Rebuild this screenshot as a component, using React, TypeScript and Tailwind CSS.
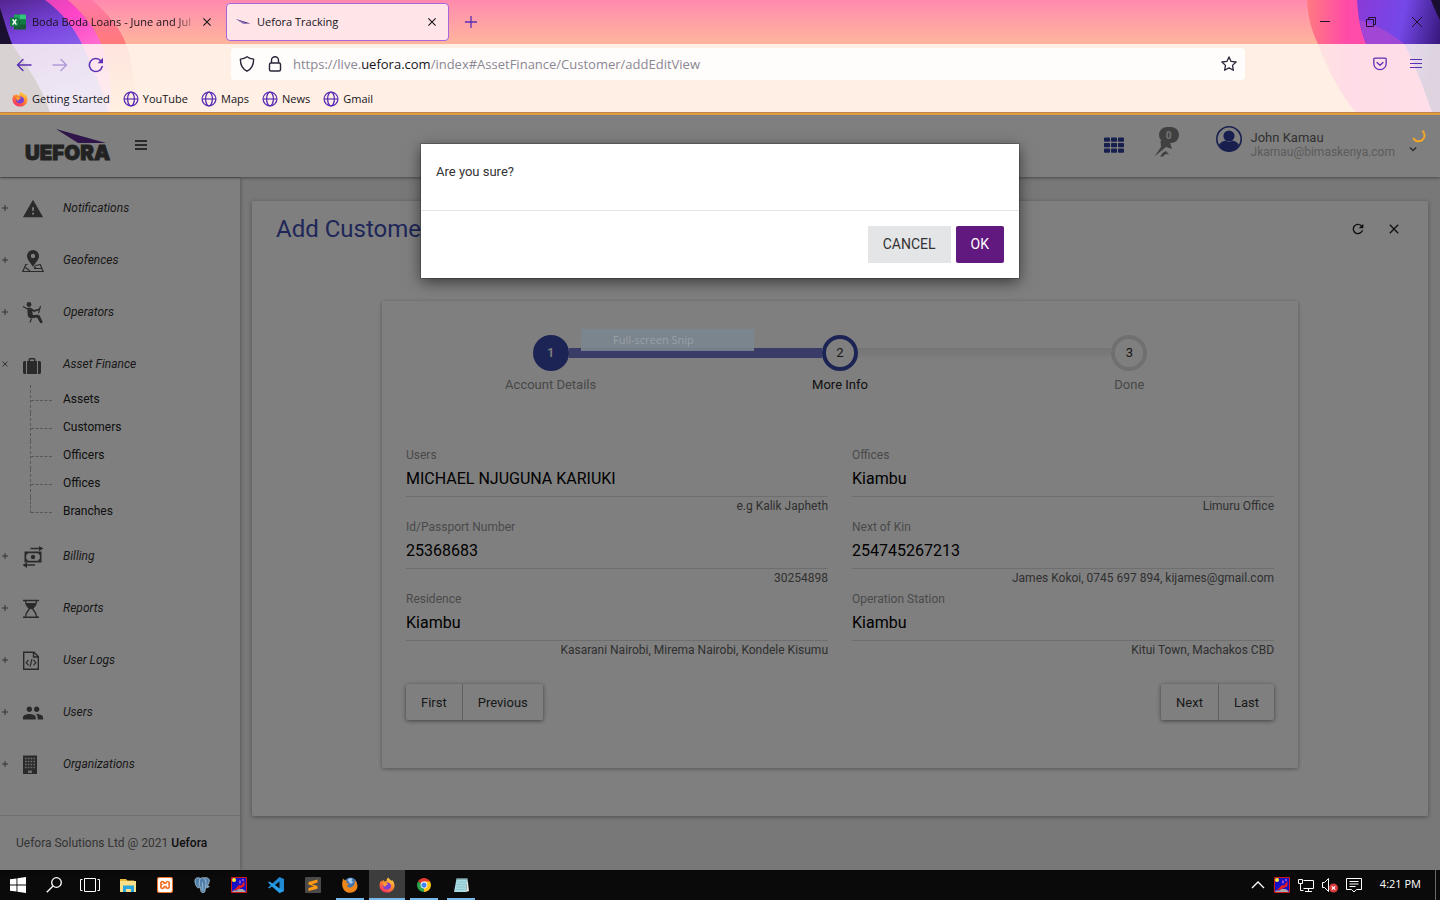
import { useId, useState, type ReactNode } from "react";
import { MdWarning, MdPeople, MdRefresh, MdClose } from "react-icons/md";
import { SiXampp } from "react-icons/si";

/* ---------- browser icons ---------- */

const Globe = () => (
  <svg className="size-4" viewBox="0 0 16 16" fill="none" stroke="#5b2fb5" strokeWidth="1.3">
    <circle cx="8" cy="8" r="6.900" />
    <ellipse cx="8" cy="8" rx="3.400" ry="6.900" />
    <path d="M1.200 8h13.600" strokeWidth="1.200" />
  </svg>
);

const Firefox = ({ className = "size-4" }: { className?: string }) => {
  const id = useId();
  return (
    <svg className={className} viewBox="0 0 16 16">
      <defs>
        <linearGradient id={id} x1="0.8" y1="0" x2="0.2" y2="1">
          <stop offset="0" stopColor="#ffe14a" />
          <stop offset="0.45" stopColor="#ff8a2b" />
          <stop offset="1" stopColor="#f5246b" />
        </linearGradient>
      </defs>
      <path fill={`url(#${id})`} d="M9.200.6c.6 1.500 2.200 2.100 3.400 3.400l.4-1c1.700 1.600 2.600 3.600 2.500 5.700-.2 4-3.500 6.900-7.500 6.900S.5 12.500.5 8.500c0-2 .7-3.700 1.700-5l.5 1.300c.6-.8 1.200-1.400 2-1.900 0 .8.300 1.200.8 1.500 1-.2 1.700 0 2.200.3C7.300 3.200 8 1.600 9.200.6z" />
      <path fill="#7b3fd6" d="M8 5.400c2.300 0 4 1.500 4 3.500s-1.700 3.600-4 3.600-3.900-1.600-3.900-3.500c0-.8.2-1.400.5-1.900.6 1 1.500 1.200 2.400 1 .9-.3 1.600-.7 1.700-1.200-.3-.3-.8-.4-1.300-.4.1-.6.300-.9.6-1.100z" />
      <path fill="#ffa030" d="M4 6.600c1-.7 2.200-.7 3-.1.600.400 1.300.4 1.700.5-.2.800-1 1.100-1.700 1.300-.6.300-.6 1-.1 1.500-1.600.1-2.900-1.300-2.900-3.200z" />
    </svg>
  );
};

const Excel = () => (
  <svg className="size-4" viewBox="0 0 16 16">
    <rect x="4" y="0.500" width="12" height="15" rx="1" fill="#185c37" />
    <path d="M4 .5h6v5H4z" fill="#21a366" />
    <path d="M10 .5h5a1 1 0 0 1 1 1v4h-6z" fill="#33c481" />
    <path d="M10 5.500h6v5h-6z" fill="#107c41" />
    <rect x="0" y="3.500" width="9" height="9" rx="1" fill="#107c41" />
    <path d="M2.600 5.400 6.400 10.600M6.400 5.400 2.600 10.600" stroke="#fff" strokeWidth="1.500" />
  </svg>
);

const Swoosh = () => (
  <svg className="size-4" viewBox="0 0 16 16">
    <path d="M1 5 15.500 9.500H8z" fill="#43217c" />
    <path d="M1 5 12 9.500H8z" fill="#8f7fc0" />
  </svg>
);

const Cross = () => (
  <svg className="size-2" viewBox="0 0 8 8" stroke="currentColor" strokeWidth="1.100">
    <path d="M.4.4 7.600 7.600M7.600.4.4 7.600" />
  </svg>
);

const ThemeArt = () => (
  <>
    <svg className="absolute left-0 top-0 h-28 w-40" viewBox="0 0 160 112" preserveAspectRatio="none">
      <defs>
        <linearGradient id="l1" x1="0" y1="0" x2="0" y2="1">
          <stop offset="0" stopColor="#ff78a8" />
          <stop offset="0.4" stopColor="#ff7a78" />
          <stop offset="1" stopColor="#ffc08a" />
        </linearGradient>
        <linearGradient id="l2" x1="0" y1="0" x2="0.6" y2="1">
          <stop offset="0" stopColor="#d040b0" />
          <stop offset="0.4" stopColor="#ff45c8" />
          <stop offset="1" stopColor="#ff9ad8" />
        </linearGradient>
        <linearGradient id="l3" x1="0" y1="0" x2="0.3" y2="1">
          <stop offset="0" stopColor="#53258f" />
          <stop offset="0.35" stopColor="#7a45e0" />
          <stop offset="1" stopColor="#a08cf8" />
        </linearGradient>
      </defs>
      <path fill="url(#l1)" d="M0 0H92C108 14 120 28 126 44C134 66 136 90 134 112H0Z" />
      <path fill="url(#l2)" d="M0 0H68C86 16 96 30 103 48C110 70 112 92 110 112H0Z" />
      <path fill="url(#l3)" d="M0 0H45C62 12 74 28 82 44C92 66 104 92 108 112H0Z" />
      <path fill="#1c1030" d="M0 8C4 20 8 34 12 44C22 60 40 82 50 112H0Z" />
    </svg>
    <svg className="absolute right-0 top-0 h-28 w-40" viewBox="0 0 160 112" preserveAspectRatio="none">
      <defs>
        <linearGradient id="r1" x1="0" y1="0" x2="1" y2="0">
          <stop offset="0" stopColor="#ff7a80" />
          <stop offset="0.3" stopColor="#ff4aa8" />
          <stop offset="1" stopColor="#ff58b8" />
        </linearGradient>
        <linearGradient id="r2" x1="0" y1="0" x2="1" y2="0.3">
          <stop offset="0" stopColor="#8a3ad8" />
          <stop offset="0.55" stopColor="#7448e8" />
          <stop offset="1" stopColor="#3a1a80" />
        </linearGradient>
      </defs>
      <path fill="url(#r1)" d="M27 0C28 18 32 32 38 44C48 70 60 94 76 112H160V0Z" />
      <path fill="url(#r2)" d="M77 0C78 18 81 32 86 44H124C136 66 144 90 152 112H160V0Z" />
      <path fill="#b048d0" d="M86 44C83 36 81 26 80 20C98 26 112 34 124 44Z" opacity="0.700" />
      <path fill="#1a0e30" d="M151 0C154 8 157 14 160 20V0Z" />
    </svg>
  </>
);

const BrowserChrome = () => (
  <header className="relative shrink-0 bg-linear-to-b from-[#ff8aae] from-0% to-[#ffb59c] to-[44px] font-['Open_Sans',sans-serif] text-[#15141a]">
    <ThemeArt />
    <div className="relative flex h-11 items-center">
      <div className="flex w-[226px] items-center pl-2.5 pr-[15px]">
        <Excel />
        <span className="ml-1.5 flex-1 whitespace-nowrap pt-px text-[11px] mask-[linear-gradient(to_right,black_85%,transparent)]">
          Boda Boda Loans - June and Jul
        </span>
        <button aria-label="Close tab" className="ml-1"><Cross /></button>
      </div>
      <div className="flex h-[38px] w-[223px] items-center rounded border border-[#a566dc] bg-[#ffe4e8] pl-2 pr-3">
        <Swoosh />
        <span className="ml-1.5 flex-1 pt-px text-[11px]">Uefora Tracking</span>
        <button aria-label="Close tab"><Cross /></button>
      </div>
      <button aria-label="New tab" className="ml-4 text-[#5b2fb5]">
        <svg className="size-3" viewBox="0 0 12 12" stroke="currentColor" strokeWidth="1.300"><path d="M6 0v12M0 6h12" /></svg>
      </button>
      <div className="ml-auto flex items-center gap-9 pr-[18px] text-[#24102f]">
        <button aria-label="Minimize"><svg className="size-2.5" viewBox="0 0 10 10" stroke="currentColor"><path d="M0 4.500h10" /></svg></button>
        <button aria-label="Restore">
          <svg className="size-2.5" viewBox="0 0 10 10" stroke="currentColor" fill="none"><path d="M.5 2.500h7v7h-7zM2.500 2.500v-2h7v7h-2" /></svg>
        </button>
        <button aria-label="Close window"><svg className="size-2.5" viewBox="0 0 10 10" stroke="currentColor"><path d="M0 0l10 10M10 0 0 10" /></svg></button>
      </div>
    </div>

    <div className="relative bg-[#fffaf3]/83">
      <div className="flex h-10 items-center pt-0.5 text-[#5b2fb5]">
        <div className="flex w-[231px] items-center gap-5 pl-4">
          <button aria-label="Back">
            <svg className="size-4" viewBox="0 0 16 16" fill="none" stroke="currentColor" strokeWidth="1.400" strokeLinecap="round"><path d="M15 8H1.500M7 2.500 1.500 8 7 13.500" /></svg>
          </button>
          <button aria-label="Forward" className="opacity-40">
            <svg className="size-4" viewBox="0 0 16 16" fill="none" stroke="currentColor" strokeWidth="1.400" strokeLinecap="round"><path d="M1 8h13.500M9 2.500 14.500 8 9 13.500" /></svg>
          </button>
          <button aria-label="Reload">
            <svg className="size-4" viewBox="0 0 16 16" fill="none" stroke="currentColor" strokeWidth="1.500" strokeLinecap="round"><path d="M14.200 9.500A6.500 6.500 0 1 1 12.800 3.800" /><path d="M15 .8v5.400H9.600z" fill="currentColor" stroke="none" /></svg>
          </button>
        </div>
        <div className="mb-0.5 flex h-8 w-full max-w-[1014px] items-center rounded bg-[#fffdfb] px-2 text-[#2b2338]">
          <svg className="size-4" viewBox="0 0 16 16" fill="none" stroke="currentColor" strokeWidth="1.400"><path d="M8 .8c2 1.500 4 2.100 6.600 2.300.1 5.600-1.700 9.700-6.600 12.100C3.100 12.800 1.300 8.700 1.400 3.100 4 2.900 6 2.300 8 .8z" strokeLinejoin="round" /></svg>
          <svg className="ml-3 size-4" viewBox="0 0 16 16" fill="none" stroke="currentColor" strokeWidth="1.400"><rect x="2.500" y="7" width="11" height="8" rx="1.500" /><path d="M4.500 7V4.200a3.500 3.500 0 0 1 7 0V7" /></svg>
          <span className="ml-2.5 flex-1 whitespace-nowrap pt-0.5 text-[13px] text-[#8b8794]">
            https://live.<span className="text-[#15141a]">uefora.com</span>/index#AssetFinance/Customer/addEditView
          </span>
          <button aria-label="Bookmark this page">
            <svg className="size-4" viewBox="0 0 16 16" fill="none" stroke="currentColor" strokeWidth="1.300" strokeLinejoin="round"><path d="m8 .9 2.100 4.500 5 .6-3.600 3.400.9 4.900L8 11.900l-4.400 2.400.9-4.900L.9 6l5-.6z" /></svg>
          </button>
        </div>
        <div className="mb-0.5 ml-auto flex items-center gap-[23px] pr-[18px]">
          <button aria-label="Pocket">
            <svg className="size-3.5" viewBox="0 0 14 14" fill="none" stroke="currentColor" strokeWidth="1.300" strokeLinecap="round" strokeLinejoin="round"><path d="M1.800 1.200h10.400a1 1 0 0 1 1 1V6.500a6.200 6.200 0 0 1-12.400 0V2.200a1 1 0 0 1 1-1z" /><path d="M4 5.500 7 8.300l3-2.800" /></svg>
          </button>
          <button aria-label="Open menu"><svg className="size-3" viewBox="0 0 12 12" stroke="currentColor" strokeWidth="1.200"><path d="M0 1.500h12M0 5.500h12M0 9.500h12" /></svg></button>
        </div>
      </div>
      <nav className="flex h-7 items-center gap-[13px] pl-3 pt-0.5 text-[11px]">
        <a href="#start" className="flex items-center gap-1"><Firefox />Getting Started</a>
        {["YouTube", "Maps", "News", "Gmail"].map((b) => (
          <a key={b} href={`#${b}`} className="flex items-center gap-1"><Globe />{b}</a>
        ))}
      </nav>
    </div>
  </header>
);

/* ---------- sidebar icons ---------- */

const MapPin = () => (
  <svg className="size-[22px]" viewBox="0 0 22 22" fill="currentColor">
    <path fillRule="evenodd" d="M11 0a6 6 0 0 1 6 6c0 4-4 7-6 11C9 13 5 10 5 6a6 6 0 0 1 6-6zm0 3.800a2.200 2.200 0 1 0 0 4.400 2.200 2.200 0 0 0 0-4.400z" />
    <path d="M5.500 14.500H3.800L.8 21.500h20.400l-3-7h-1.700M3.500 17.500 8 21M13 15.500l4-.5M12 18.500h7.500M14.500 18.500l-2.500-2" fill="none" stroke="currentColor" strokeWidth="1.200" />
  </svg>
);

const Operator = () => (
  <svg className="size-[22px]" viewBox="0 0 22 22" fill="currentColor">
    <circle cx="7" cy="2.500" r="2.400" />
    <path d="M5.200 6c1-.8 2.800-.8 3.800 0l3.200 2 4.800-1.500.6 1.400-5.500 2-2-.8.8 4 5.200-.3c.8 0 1.300.4 1.600 1l3.200 6.500-2.300 1.300-3.600-6-5 .6C7.500 16.400 6 15.200 5.800 13.500z" />
    <path d="m1 4.500 4.500 2.500M18.500 4l-2 7M9.500 16.500 8 20.500" stroke="currentColor" strokeWidth="1.200" />
  </svg>
);

const Suitcase = () => (
  <svg className="mt-0.5 h-4 w-5" viewBox="0 0 20 16" fill="currentColor">
    <path d="M1 4.500A1.500 1.500 0 0 1 2.500 3H4v13H2.500A1.500 1.500 0 0 1 1 14.500zM16 3h1.500A1.500 1.500 0 0 1 19 4.500v10a1.500 1.500 0 0 1-1.500 1.500H16z" />
    <path fillRule="evenodd" d="M5 3h1.500V1.500A1.500 1.500 0 0 1 8 0h4a1.500 1.500 0 0 1 1.500 1.500V3H15v13H5zm3 0h4V1.400H8z" />
  </svg>
);

const Billing = () => (
  <svg className="size-[22px]" viewBox="0 0 22 22" fill="currentColor">
    <path d="M8.500 1.800H17V0l4.500 2.500L17 5V3.200H8.500zM13 19.800H5V22L.5 19 5 16.500v1.700h8z" />
    <path fillRule="evenodd" d="M2.500 5.500h17v11h-17zm3.300 1.800a2 2 0 0 1-1.600 1.600v4.200a2 2 0 0 1 1.600 1.600h10.400a2 2 0 0 1 1.600-1.600V8.900a2 2 0 0 1-1.600-1.600z" />
    <circle cx="11" cy="11" r="2.200" />
  </svg>
);

const Hourglass = () => (
  <svg className="h-5 w-[18px]" viewBox="0 0 18 20" fill="currentColor">
    <path d="M1 .8h16v1.500H1zM1 17.500h16V19H1z" />
    <path d="M3.500 2c0 4 2.500 6 4 7.900-1.500 2-4 4-4 8M14.500 2c0 4-2.500 6-4 7.900 1.500 2 4 4 4 8" fill="none" stroke="currentColor" strokeWidth="1.400" />
    <path d="M4 4h10c-.7 3-2.500 4.500-3.500 6h-3C6.500 8.500 4.700 7 4 4z" />
  </svg>
);

const FileCode = () => (
  <svg className="h-5 w-[18px]" viewBox="0 0 18 20" fill="none" stroke="currentColor" strokeWidth="1.400">
    <path d="M1.700 1.200H12l4.300 4.300v12.800H1.700zM11.500 1.200V6h4.800" />
    <path d="M6.500 9 4.200 11.700l2.300 2.700M11.500 9l2.300 2.700-2.300 2.700M10 8l-2 7.700" strokeWidth="1.200" />
  </svg>
);

const Building = () => (
  <svg className="h-5 w-4" viewBox="0 0 16 20">
    <path fill="currentColor" d="M1 .5h14v18.500H1z" />
    <path d="M3 3.500h10M3 6.500h10M3 9.500h10M3 12.500h10" stroke="#fff" strokeOpacity="0.800" strokeWidth="1.500" strokeDasharray="1.600 1.200" />
    <path d="M6 15.500h4V18H6z" fill="#fff" fillOpacity="0.800" />
  </svg>
);

type Item = { label: string; icon: ReactNode; children?: string[] };

const items: Item[] = [
  { label: "Notifications", icon: <MdWarning className="size-[22px]" /> },
  { label: "Geofences", icon: <MapPin /> },
  { label: "Operators", icon: <Operator /> },
  { label: "Asset Finance", icon: <Suitcase />, children: ["Assets", "Customers", "Officers", "Offices", "Branches"] },
  { label: "Billing", icon: <Billing /> },
  { label: "Reports", icon: <Hourglass /> },
  { label: "User Logs", icon: <FileCode /> },
  { label: "Users", icon: <MdPeople className="size-[22px]" /> },
  { label: "Organizations", icon: <Building /> },
];

const Sidebar = () => (
  <aside className="z-10 flex w-60 shrink-0 flex-col bg-white shadow-[0_0_4px_rgba(0,0,0,0.4)]">
    <ul className="flex flex-1 flex-col gap-2.5 pt-[9px] text-[12px] text-[#333333]">
      {items.map((it) => (
        <li key={it.label}>
          <button className="flex h-[42px] w-full items-center text-left italic">
            <span className="w-[22px] pl-0.5 text-[#555555]">
              <svg className="size-1.5" viewBox="0 0 6 6" stroke="currentColor" strokeWidth="0.900">
                <path d={it.children ? "M.5.5l5 5M5.500.5l-5 5" : "M3 0v6M0 3h6"} />
              </svg>
            </span>
            <span className="flex h-6 w-[41px] text-[#555555]">
              <span className="flex h-[26px] items-center">{it.icon}</span>
            </span>
            {it.label}
          </button>
          {it.children && (
            <ul>
              {it.children.map((c, i) => (
                <li key={c} className="flex h-7 items-center">
                  <span className={i === 4 ? "ml-[30px] h-4 w-[33px] self-start border-l border-dashed border-[#b0b0b0]" : "ml-[30px] h-full w-[33px] border-l border-dashed border-[#b0b0b0]"}>
                    <span className="block h-4 w-[21px] border-b border-dashed border-[#b0b0b0]" />
                  </span>
                  <a href={`#${c}`} className="text-[#212121]">{c}</a>
                </li>
              ))}
            </ul>
          )}
        </li>
      ))}
    </ul>
    <footer className="border-t border-[#e0e0e0] px-4 pb-[18px] pt-[18px] text-[12px] leading-[18px] text-[#6a6a6a]">
      Uefora Solutions Ltd @ 2021 <span className="font-medium text-[#212121]">Uefora</span>
    </footer>
  </aside>
);

/* ---------- application ---------- */

const TopBar = () => (
  <div className="z-20 flex h-[62px] shrink-0 items-center bg-white pb-0.5 shadow-[0_1px_3px_rgba(0,0,0,0.4)]">
    <a href="#home" aria-label="Uefora home" className="ml-6 block">
      <svg className="h-9 w-24" viewBox="0 0 96 36">
        <path d="M32 2 82 16H54z" fill="#5f2a94" />
        <text x="1" y="33" fontFamily="Inter, sans-serif" fontWeight="900" fontSize="20.5" fill="#444" stroke="#444" strokeWidth="0.800">UEFORA</text>
      </svg>
    </a>
    <button aria-label="Toggle menu" className="ml-[15px]">
      <svg className="size-3" viewBox="0 0 12 12" stroke="#555" strokeWidth="2"><path d="M0 2h12M0 6h12M0 10h12" /></svg>
    </button>
    <div className="ml-auto flex items-center">
      <button aria-label="Apps">
        <svg className="h-4 w-5" viewBox="0 0 20 16" fill="#2f3f9f">
          {[0, 7, 14].map((x) => [0.500, 6, 11.500].map((y) => <rect key={`${x}-${y}`} x={x} y={y} width="6" height="4.200" rx="0.800" />))}
        </svg>
      </button>
      <button aria-label="Alerts" className="relative ml-[29px] h-9">
        <svg className="h-7 w-7" viewBox="0 0 28 28" fill="#808080">
          <path d="M1.500 25.500 8 16l-.5-6L16 8l3 10-6-2z" />
          <path d="M7 25.500l3-4 3-1.500 3 3.500-3.500-.5L10 25.500z" />
        </svg>
        <span className="absolute right-0.5 top-0 flex h-4 w-5 items-center justify-center rounded-full bg-[#808080] text-[10px] font-bold text-[#e8e8e8]">0</span>
      </button>
      <button className="ml-[34px] flex items-center text-left">
        <svg className="mb-3 size-7" viewBox="0 0 28 28">
          <circle cx="14" cy="14" r="12.200" fill="none" stroke="#303f9f" strokeWidth="1.600" />
          <circle cx="14" cy="11" r="5.600" fill="#303f9f" />
          <path d="M4 20c2-3.500 5-4 6.500-4.200 2 1.400 5 1.400 7 0 1.500.2 4.500.7 6.500 4.200-2 4-6 6-10 6s-8-2-10-6z" fill="#303f9f" />
        </svg>
        <span className="ml-2 text-[13px] leading-[14px] text-[#616161]">
          John Kamau
          <span className="block text-[12px] text-[#b8b8b8]">Jkamau@bimaskenya.com</span>
        </span>
        <svg className="ml-3.5 mr-[23px] mt-2 size-2" viewBox="0 0 8 8" fill="none" stroke="#555" strokeWidth="1.300"><path d="M.8 2.500 4 5.500l3.200-3" /></svg>
      </button>
    </div>
  </div>
);

const fields = [
  ["Users", "MICHAEL NJUGUNA KARIUKI", "e.g Kalik Japheth"],
  ["Offices", "Kiambu", "Limuru Office"],
  ["Id/Passport Number", "25368683", "30254898"],
  ["Next of Kin", "254745267213", "James Kokoi, 0745 697 894, kijames@gmail.com"],
  ["Residence", "Kiambu", "Kasarani Nairobi, Mirema Nairobi, Kondele Kisumu"],
  ["Operation Station", "Kiambu", "Kitui Town, Machakos CBD"],
];

const Field = ({ label, value, hint }: { label: string; value: string; hint: string }) => {
  const id = useId();
  const [v, setV] = useState(value);
  return (
    <div className="flex h-[72px] flex-col">
      <label htmlFor={id} className="text-[12px] leading-4 text-[#959595]">{label}</label>
      <input id={id} value={v} onChange={(e) => setV(e.target.value)} className="h-[34px] w-full border-b border-[#dcdcdc] bg-transparent pb-[3px] text-[16px] text-black outline-none" />
      <p className="text-right text-[12px] leading-[18px] text-[#616161]">{hint}</p>
    </div>
  );
};

const Wizard = () => (
  <section className="mx-auto w-full max-w-[916px] rounded-xs bg-white px-6 pb-12 pt-[34px] shadow-[0_1px_4px_rgba(0,0,0,0.35)]">
    <ol className="grid grid-cols-3 text-[13px]">
      <li className="flex flex-col items-center">
        <div className="flex w-full items-center">
          <span className="h-2.5 flex-1" />
          <span className="flex size-9 items-center justify-center rounded-full bg-[#3949ab] font-medium text-white">1</span>
          <span className="h-2.5 flex-1 bg-[#7078cc]" />
        </div>
        <span className="mt-1 leading-5 text-[#909090]">Account Details</span>
      </li>
      <li className="flex flex-col items-center">
        <div className="flex w-full items-center">
          <span className="h-2.5 flex-1 bg-[#7078cc]" />
          <span className="flex size-9 items-center justify-center rounded-full border-4 border-[#3949ab] bg-white text-[#333333]">2</span>
          <span className="h-2.5 flex-1 bg-linear-to-b from-[#eaeaea] to-[#fafafa]" />
        </div>
        <span className="mt-1 leading-5 text-[#212121]">More Info</span>
      </li>
      <li className="flex flex-col items-center">
        <div className="flex w-full items-center">
          <span className="h-2.5 flex-1 bg-linear-to-b from-[#eaeaea] to-[#fafafa]" />
          <span className="flex size-9 items-center justify-center rounded-full border-4 border-[#e0e0e0] bg-white text-[#333333]">3</span>
          <span className="h-2.5 flex-1" />
        </div>
        <span className="mt-1 leading-5 text-[#909090]">Done</span>
      </li>
    </ol>
    <form className="mt-[52px]" onSubmit={(e) => e.preventDefault()}>
      <div className="grid grid-cols-2 gap-x-6">
        {fields.map(([l, v, h]) => <Field key={l} label={l} value={v} hint={h} />)}
      </div>
      <div className="mt-[21px] flex justify-between text-[13px] text-[#333333]">
        {[["First", "Previous"], ["Next", "Last"]].map((g) => (
          <div key={g[0]} className="flex divide-x divide-[#c0c0c0] rounded-xs shadow-[0_1px_4px_rgba(0,0,0,0.5)]">
            {g.map((b) => <button key={b} type="button" className="h-9 px-[15px] pt-0.5">{b}</button>)}
          </div>
        ))}
      </div>
    </form>
  </section>
);

const ConfirmDialog = () => (
  <div role="dialog" aria-modal="true" aria-label="Confirm" className="absolute inset-x-0 top-8 mx-auto w-full max-w-[598px] bg-white text-[13px] text-[#333333] shadow-[0_4px_14px_rgba(0,0,0,0.55)] outline outline-black/20">
    <p className="h-[66px] px-[15px] pt-[18px] leading-5">Are you sure?</p>
    <div className="flex justify-end gap-[5px] border-t border-[#e3e4e6] p-[15px] text-[14px]">
      <button className="h-[37px] bg-[#e4e5e7] px-[15px]">CANCEL</button>
      <button className="h-[37px] rounded-xs bg-[#62197f] px-[15px] text-white">OK</button>
    </div>
  </div>
);

/* ---------- taskbar ---------- */

const Emblem = () => (
  <svg className="size-4" viewBox="0 0 16 16">
    <path fill="#1410c8" stroke="#d01818" strokeWidth="1" d="M.5.5h15v15H.5z" />
    <circle cx="3" cy="3" r="2" fill="#ffee30" />
    <path d="M2 14 8 8l2 .5L13.500 4v5L8 12z" fill="#e81c24" />
    <path d="M9 3.500v3M12 2v2" stroke="#c060d0" strokeWidth="1.500" />
    <path d="M1.500 13.500h4l2-1.500h4l3 2v1h-13z" fill="#a8a8a8" />
  </svg>
);

const Elephant = () => (
  <svg className="size-4" viewBox="0 0 16 16">
    <path d="M1 5C.5 2 2 .8 4 .8c1 0 1.700.2 2.500.6C8 .6 9 .6 10 .9c2-.6 4.500 0 5.200 1.600.7 2-1 5-2.200 6.500l2.200.2c-.4 1.300-2.200 1.800-3.700 1.500-.4 2-.3 4.500-1.700 5-1.500.4-2.700-.4-3-2l-.2-3.500c-1 .2-1.300 1-2.600.6C2.300 10 1.300 7 1 5z" fill="#4f7fa8" stroke="#b4cde0" strokeWidth="0.800" />
    <path d="M6 2C5 4 5.500 6.500 5.200 9.500M10.500 1.500c1.500 2 2 5 1 8.500M8.200 5.500c.8 2 .5 6 .8 8.500" fill="none" stroke="#b4cde0" strokeWidth="0.800" />
  </svg>
);

const apps: { name: string; icon: ReactNode; state?: "open" | "active" }[] = [
  { name: "File Explorer", icon: <svg className="size-4" viewBox="0 0 16 16"><path d="M0 2h6l1.500 1.500H14V7H0z" fill="#e8b83a" /><path d="M0 4h16v11H0z" fill="#fbe08c" /><path d="M3 8.500h11V15h-3v-3H6v3H3z" fill="#2aa5dc" /></svg> },
  { name: "XAMPP", icon: <span className="flex size-4 items-center justify-center rounded-xs bg-[#f0742a] text-white"><SiXampp className="size-3.5" /></span> },
  { name: "PostgreSQL", icon: <Elephant /> },
  { name: "Emblem", icon: <Emblem /> },
  { name: "Visual Studio Code", icon: <svg className="size-4" viewBox="0 0 16 16"><path d="M11.500 0 16 2v12l-4.500 2L4 9.500 1.500 11.500 0 10.500 11.500 0z" fill="#1f8ad2" /><path d="M0 5.500l1.500-1L16 14l-4.500 2z" fill="#2a9de8" /><path d="M11.500 4.500v7L7 8z" fill="#0a0a0a" /></svg> },
  { name: "Sublime Text", icon: <svg className="size-4" viewBox="0 0 16 16"><rect width="16" height="16" rx="1" fill="#4a4a4a" /><path d="M12.500 2.500v3L7 7.200l5.500 1.900v2.700L3.500 14v-3L9 9.200 3.500 7.400V5z" fill="#ff9a12" /></svg> },
  { name: "Firefox Developer", icon: <svg className="size-4" viewBox="0 0 16 16"><circle cx="8.500" cy="7" r="6.500" fill="#3f74b0" /><path d="M5.500 3c1.500-2 4-2 5-1l-1 2 2 1-3 2z" fill="#a8cdf0" /><path d="M1 1.500C2 3 4 3.500 5 4l-1 2 3 .5c0 1.500-2 1.500-2 2.500 1.500 2 4 2 5.500.5C13 8 13 5 12.500 3c3 2.500 3.500 6 2.500 8.500-2 4.500-8 5.500-11.500 3C.5 12 0 9 .2 6z" fill="#f0861a" /></svg>, state: "open" },
  { name: "Firefox", icon: <Firefox />, state: "active" },
  { name: "Chrome", icon: <svg className="size-3.5" viewBox="0 0 16 16"><path d="M8 8 1.100 4A8 8 0 0 1 14.900 4z" fill="#e33b2e" /><path d="M8 8V4h6.900A8 8 0 0 1 8 16z" fill="#fbc116" /><path d="M8 8v8A8 8 0 0 1 1.100 4z" fill="#2ba24c" /><circle cx="8" cy="8" r="3.900" fill="#fff" /><circle cx="8" cy="8" r="3" fill="#4285f4" /></svg>, state: "open" },
  { name: "Notepad", icon: <svg className="size-4" viewBox="0 0 16 16"><path d="M3.500 1.500h11L13 15H1z" fill="#a9dbe0" /><path d="M14.500 1.500 16 14l-3 1z" fill="#e8e8e0" /><path d="M3.500 1.500h11l-.1 1H3.300z" fill="#6d8a90" /><path d="M4 5h9M3.700 7.500h9M3.300 10h9M3 12.500h9" stroke="#7bb8c4" strokeWidth="0.600" /></svg>, state: "open" },
];

const Taskbar = () => (
  <footer className="flex h-[30px] shrink-0 items-stretch bg-[#0a0a0a] font-['Open_Sans',sans-serif] text-[11px] text-white">
    <button aria-label="Start" className="flex w-9 items-center justify-center">
      <svg className="size-4" viewBox="0 0 16 16" fill="#fff"><path d="M0 2.300 6.500 1.400V7.500H0zM7.400 1.300 16 0v7.500H7.400zM0 8.400h6.500v6.200L0 13.700zM7.400 8.400H16V16l-8.600-1.200z" /></svg>
    </button>
    <button aria-label="Search" className="flex w-9 items-center justify-center">
      <svg className="size-4" viewBox="0 0 16 16" fill="none" stroke="#fff" strokeWidth="1.300"><circle cx="10.500" cy="5.500" r="4.800" /><path d="M7 9 .8 15.300" /></svg>
    </button>
    <button aria-label="Task View" className="mr-0.5 flex w-9 items-center justify-center">
      <svg className="h-4 w-5" viewBox="0 0 20 16" fill="none" stroke="#fff"><path d="M4.500 1.500h11v13h-11zM2.500 2.500h-2v11h2M17.500 2.500h2v11h-2" /></svg>
    </button>
    <div className="flex gap-px">
      {apps.map((a) => (
        <button key={a.name} aria-label={a.name} className={a.state === "active" ? "flex w-9 flex-col items-center bg-[#3d3d3d]" : "flex w-9 flex-col items-center"}>
          <span className="flex h-7 items-center pt-0.5">{a.icon}</span>
          <span className={a.state === "active" ? "h-0.5 w-full bg-[#76b9ed]" : a.state ? "h-0.5 w-7 bg-[#76b9ed]" : "h-0.5"} />
        </button>
      ))}
    </div>
    <div className="ml-auto flex items-center gap-2">
      <svg className="size-4" viewBox="0 0 16 16" fill="none" stroke="#fff" strokeWidth="1.300"><path d="m2 11 6-6 6 6" /></svg>
      <Emblem />
      <svg className="size-4" viewBox="0 0 16 16" fill="none" stroke="#fff"><path d="M5.500 3.500h10v8h-10M10.500 11.500v3M7 14.500h7M.5 2.500h4v4h-4zM2.500 6.500v7h3" /></svg>
      <svg className="size-4" viewBox="0 0 16 16"><path d="M.5 5.500h2l4-4v13l-4-4h-2z" fill="none" stroke="#fff" /><circle cx="11.500" cy="11" r="4.500" fill="#d93a3a" /><path d="m9.800 9.300 3.400 3.400M13.200 9.300l-3.400 3.400" stroke="#fff" strokeWidth="1.200" /></svg>
      <svg className="size-4" viewBox="0 0 16 16" fill="none" stroke="#fff"><path d="M.5 1.500h15v11h-5L8 15l-2.500-2.500h-5zM3.500 4.500h9M3.500 7h9M3.500 9.500h6" /></svg>
      <time className="ml-2.5 mr-1.5 pb-0.5">4:21 PM</time>
      <span className="mr-1 h-full w-px bg-[#6a6a6a]" />
    </div>
  </footer>
);

export default function App() {
  return (
    <div className="flex min-h-screen flex-col font-[Roboto,sans-serif]">
      <BrowserChrome />
      <div className="relative flex flex-1 flex-col bg-[#f0f0f0]">
        <div className="h-[3px] shrink-0" />
        <TopBar />
        <div className="flex flex-1 pt-px">
          <Sidebar />
          <main className="flex-1 px-3 pt-[23px]">
            <div className="rounded-xs bg-white pb-12 shadow-[0_1px_4px_rgba(0,0,0,0.35)]">
              <div className="flex h-[100px] items-start justify-between pl-6 pr-[26px] pt-3">
                <h1 className="text-[24px] leading-8 text-[#3f4db0]">Add Customer</h1>
                <div className="flex h-8 items-center gap-5 text-[#212121]">
                  <button aria-label="Refresh"><MdRefresh className="size-4" /></button>
                  <button aria-label="Close"><MdClose className="size-4" /></button>
                </div>
              </div>
              <Wizard />
            </div>
          </main>
        </div>

        <div className="absolute inset-0 z-30 bg-black/50">
          <div className="absolute left-[581px] top-[217px] flex h-[22px] w-[173px] items-center bg-[#7b868f]/90 pl-8 font-['Open_Sans',sans-serif] text-[11px] text-[#9aa0a6]">
            Full-screen Snip
          </div>
          <ConfirmDialog />
          <div className="absolute inset-x-0 top-0 h-[3px] border-t border-[#c8824a] bg-[#dca040]" />
          <svg className="absolute right-3.5 top-[17px] size-3.5" viewBox="0 0 14 14" fill="none" stroke="#f5a623" strokeWidth="2"><path d="M10.500 1.800A6 6 0 1 1 1.200 9" /></svg>
        </div>
      </div>
      <Taskbar />
    </div>
  );
}
